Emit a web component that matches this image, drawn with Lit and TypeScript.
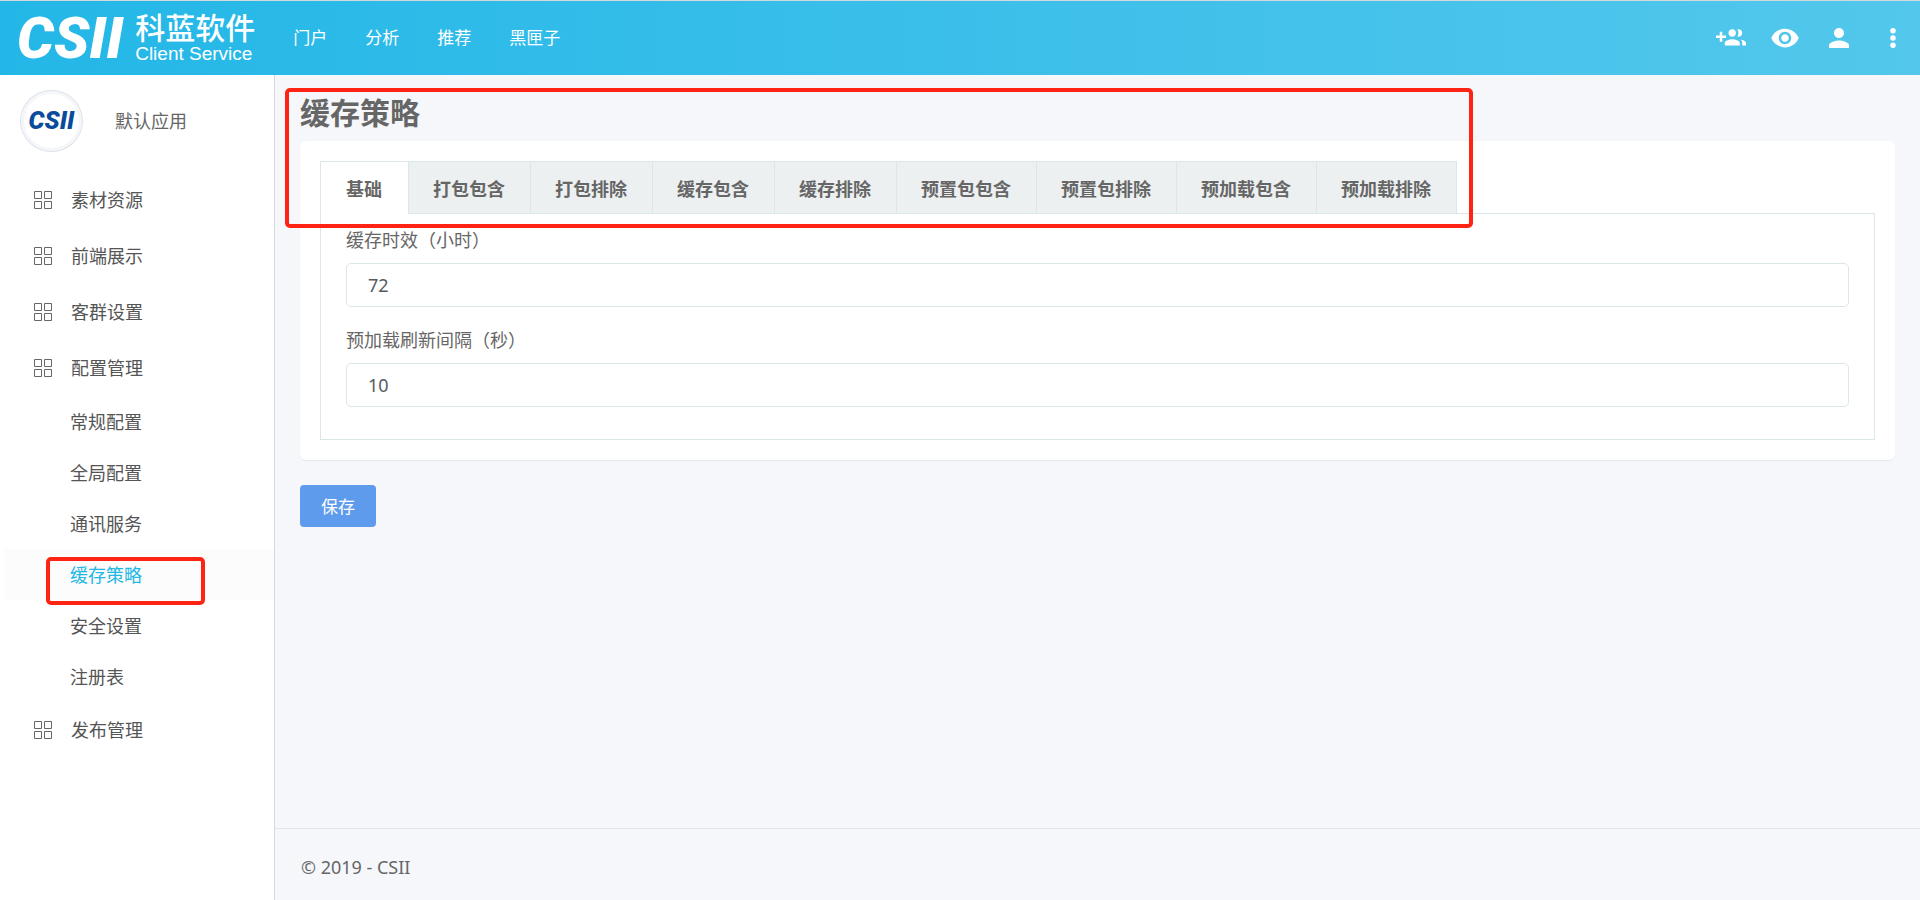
import { LitElement, html, css, svg } from "lit";
import { customElement, state } from "lit/decorators.js";
import { classMap } from "lit/directives/class-map.js";

interface MenuGroup {
  label: string;
  children?: string[];
}

const NAV = ["门户", "分析", "推荐", "黑匣子"];

const MENU: MenuGroup[] = [
  { label: "素材资源" },
  { label: "前端展示" },
  { label: "客群设置" },
  {
    label: "配置管理",
    children: ["常规配置", "全局配置", "通讯服务", "缓存策略", "安全设置", "注册表"],
  },
  { label: "发布管理" },
];

const TABS = [
  "基础",
  "打包包含",
  "打包排除",
  "缓存包含",
  "缓存排除",
  "预置包包含",
  "预置包排除",
  "预加载包含",
  "预加载排除",
];

const ACTIONS = [
  {
    label: "添加用户",
    shape: svg`<path d="M8 10H5V7H3v3H0v2h3v3h2v-3h3v-2zm10 1c1.66 0 2.99-1.34 2.99-3S19.66 5 18 5c-.32 0-.63.05-.91.14.57.81.9 1.79.9 2.86s-.34 2.04-.9 2.86c.28.09.59.14.91.14zm-5 0c1.66 0 2.99-1.34 2.99-3S14.66 5 13 5s-3 1.34-3 3 1.34 3 3 3zm6.62 2.16c.83.73 1.38 1.66 1.38 2.84v2h3v-2c0-1.54-2.37-2.49-4.38-2.84zM13 13c-2 0-6 1-6 3v2h12v-2c0-2-4-3-6-3z"/>`,
  },
  {
    label: "预览",
    shape: svg`<path d="M12 4.5C7 4.5 2.73 7.61 1 12c1.73 4.39 6 7.5 11 7.5s9.27-3.11 11-7.5c-1.73-4.39-6-7.5-11-7.5zM12 17c-2.76 0-5-2.24-5-5s2.24-5 5-5 5 2.24 5 5-2.24 5-5 5zm0-8c-1.66 0-3 1.34-3 3s1.34 3 3 3 3-1.34 3-3-1.34-3-3-3z"/>`,
  },
  {
    label: "账户",
    shape: svg`<path d="M12 12c2.21 0 4-1.79 4-4s-1.79-4-4-4-4 1.79-4 4 1.79 4 4 4zm0 2c-2.67 0-8 1.34-8 4v2h16v-2c0-2.66-5.33-4-8-4z"/>`,
  },
  {
    label: "更多",
    shape: svg`<path d="M12 8.4a2.2 2.2 0 1 0 0-4.4 2.2 2.2 0 0 0 0 4.4zm0 1.4a2.2 2.2 0 1 0 0 4.4 2.2 2.2 0 0 0 0-4.4zm0 5.8a2.2 2.2 0 1 0 0 4.4 2.2 2.2 0 0 0 0-4.4z"/>`,
  },
];

@customElement("app-header")
class AppHeader extends LitElement {
  static styles = css`
    :host {
      display: flex;
      align-items: center;
      box-sizing: border-box;
      height: 75px;
      padding: 0 12px 0 17px;
      border-top: 1px solid #d3d9dc;
      background: linear-gradient(90deg, #23b7e7, #53c7ec);
      color: #fff;
    }
    .brand {
      display: flex;
      align-items: center;
      gap: 12px;
      color: inherit;
      text-decoration: none;
    }
    .mark {
      font: italic 900 58px/60px Roboto, sans-serif;
    }
    .names {
      display: flex;
      flex-direction: column;
      font-family: "Liberation Sans", "Noto Sans CJK SC", sans-serif;
    }
    .cn {
      font-size: 30px;
      line-height: 30px;
      font-weight: 500;
    }
    .en {
      font-size: 19px;
      line-height: 19px;
    }
    .nav {
      display: flex;
      gap: 38px;
      margin-left: 38px;
    }
    .nav a {
      color: inherit;
      font-size: 17px;
      line-height: 24px;
      text-decoration: none;
    }
    .actions {
      display: flex;
      gap: 24px;
      margin-left: auto;
    }
    .actions button {
      padding: 0;
      border: 0;
      background: none;
      color: inherit;
      cursor: pointer;
    }
    .actions svg {
      display: block;
      width: 30px;
      height: 30px;
      fill: currentColor;
    }
  `;

  render() {
    return html`
      <a class="brand" href="#">
        <span class="mark">CSII</span>
        <span class="names">
          <span class="cn">科蓝软件</span>
          <span class="en">Client Service</span>
        </span>
      </a>
      <nav class="nav">${NAV.map((n) => html`<a href="#">${n}</a>`)}</nav>
      <div class="actions">
        ${ACTIONS.map(
          (a) => html`<button type="button" aria-label=${a.label}>
            <svg viewBox="0 0 24 24" aria-hidden="true">${a.shape}</svg>
          </button>`
        )}
      </div>
    `;
  }
}

@customElement("app-sidebar")
class AppSidebar extends LitElement {
  @state() private current = "缓存策略";

  static styles = css`
    :host {
      display: block;
      box-sizing: border-box;
      border-right: 1px solid #d5d7da;
      background: #fff;
      color: #555;
      font-size: 18px;
      line-height: 24px;
    }
    .app {
      display: flex;
      align-items: center;
      gap: 32px;
      padding: 15px 20px 20px;
      color: #666;
    }
    .avatar {
      display: flex;
      align-items: center;
      justify-content: center;
      box-sizing: border-box;
      width: 63px;
      height: 62px;
      border: 1px solid #dde2e8;
      border-radius: 50%;
      box-shadow: inset 0 0 0 3px #f5f6fa;
      color: #0a4c9c;
      font: italic 900 25px/28px Roboto, sans-serif;
    }
    .menu,
    .sub {
      margin: 0;
      padding: 0;
      list-style: none;
    }
    .link {
      display: flex;
      align-items: center;
      gap: 19px;
      height: 56px;
      padding-left: 34px;
      color: inherit;
      text-decoration: none;
    }
    .link svg {
      width: 18px;
      height: 18px;
      fill: none;
      stroke: #666;
    }
    .sub a {
      display: flex;
      align-items: center;
      height: 51px;
      margin-left: 4px;
      padding-left: 66px;
      color: inherit;
      text-decoration: none;
    }
    .sub a.active {
      background: #fcfcfc;
      color: #23b7e5;
    }
    .sub li {
      position: relative;
    }
    .marker {
      position: absolute;
      top: 8px;
      left: 46px;
      right: 69px;
      bottom: -5px;
      border: 4px solid #ff2314;
      border-radius: 5px;
      pointer-events: none;
    }
  `;

  private item(label: string) {
    const active = label === this.current;
    return html`<li>
      <a
        href="#"
        class=${classMap({ active })}
        @click=${(e: Event) => {
          e.preventDefault();
          this.current = label;
        }}
        >${label}</a
      >
      ${active ? html`<span class="marker"></span>` : ""}
    </li>`;
  }

  render() {
    return html`
      <div class="app"><span class="avatar">CSII</span><span>默认应用</span></div>
      <ul class="menu">
        ${MENU.map(
          (g) => html`<li>
            <a class="link" href="#">
              <svg viewBox="0 0 18 18" aria-hidden="true">
                <path d="M.5.5h7v7h-7zM10.5.5h7v7h-7zM.5 10.5h7v7h-7zM10.5 10.5h7v7h-7z" />
              </svg>
              <span>${g.label}</span>
            </a>
            ${g.children
              ? html`<ul class="sub">${g.children.map((c) => this.item(c))}</ul>`
              : ""}
          </li>`
        )}
      </ul>
    `;
  }
}

@customElement("cache-policy")
class CachePolicy extends LitElement {
  @state() private tab = 0;

  static styles = css`
    :host {
      display: block;
      padding: 20px 25px;
      color: #666;
    }
    .region {
      position: relative;
    }
    .marker {
      position: absolute;
      top: -7px;
      left: -15px;
      width: 1180px;
      height: 132px;
      border: 4px solid #ff2314;
      border-radius: 5px;
      pointer-events: none;
    }
    h1 {
      margin: 0 0 10px;
      font-size: 30px;
      line-height: 36px;
      font-weight: 700;
    }
    .card {
      padding: 20px;
      border-radius: 6px;
      background: #fff;
      box-shadow: 0 1px 1px #e6e9ee;
    }
    .tabs {
      position: relative;
      display: flex;
      width: max-content;
      margin-bottom: -1px;
      border: 1px solid #dbe6e8;
      border-bottom: 0;
    }
    .tab {
      height: 52px;
      padding: 0 25px;
      border: 0;
      border-bottom: 1px solid #dbe6e8;
      background: #ecf0f1;
      color: inherit;
      font: inherit;
      font-size: 18px;
      font-weight: 700;
      cursor: pointer;
    }
    .tab + .tab {
      box-shadow: inset 1px 0 #dbe6e8;
    }
    .tab.active {
      padding-right: 26px;
      border-bottom-color: #fff;
      background: #fff;
    }
    .panel {
      padding: 14px 25px 32px;
      border: 1px solid #dbe6e8;
    }
    .field + .field {
      margin-top: 21px;
    }
    label {
      display: block;
      margin-bottom: 10px;
      font-size: 18px;
      line-height: 25px;
    }
    input {
      display: block;
      box-sizing: border-box;
      width: 100%;
      height: 44px;
      padding: 0 21px;
      border: 1px solid #dbe6e8;
      border-radius: 5px;
      background: #fff;
      color: #555b61;
      font: inherit;
      font-size: 18px;
    }
    .save {
      display: block;
      height: 42px;
      margin-top: 25px;
      padding: 0 21px 2px;
      border: 0;
      border-radius: 4px;
      background: #5e9bec;
      color: #fff;
      font: inherit;
      font-size: 17px;
      cursor: pointer;
    }
  `;

  render() {
    return html`
      <div class="region">
        <h1>缓存策略</h1>
        <div class="card">
          <div class="tabs" role="tablist">
            ${TABS.map(
              (t, i) => html`<button
                type="button"
                role="tab"
                aria-selected=${i === this.tab}
                class=${classMap({ tab: true, active: i === this.tab })}
                @click=${() => (this.tab = i)}
              >
                ${t}
              </button>`
            )}
          </div>
          <div class="panel" role="tabpanel">
            <div class="field">
              <label for="ttl">缓存时效（小时）</label>
              <input id="ttl" type="text" value="72" />
            </div>
            <div class="field">
              <label for="interval">预加载刷新间隔（秒）</label>
              <input id="interval" type="text" value="10" />
            </div>
          </div>
        </div>
        <span class="marker"></span>
      </div>
      <button class="save" type="button">保存</button>
    `;
  }
}

@customElement("app-root")
class AppRoot extends LitElement {
  static styles = css`
    :host {
      display: flex;
      flex-direction: column;
      min-height: 100vh;
      background: #f5f7fb;
      font-family: "Noto Sans", "Noto Sans CJK SC", sans-serif;
    }
    .body {
      display: grid;
      grid-template-columns: 275px minmax(0, 1fr);
      flex: 1;
    }
    .main {
      display: flex;
      flex-direction: column;
    }
    .content {
      flex: 1;
    }
    footer {
      padding: 25px 26px 20px;
      border-top: 1px solid #e2e4e8;
      color: #666;
      font-size: 18px;
      line-height: 26px;
    }
  `;

  render() {
    return html`
      <app-header></app-header>
      <div class="body">
        <app-sidebar></app-sidebar>
        <div class="main">
          <cache-policy class="content"></cache-policy>
          <footer>© 2019 - CSII</footer>
        </div>
      </div>
    `;
  }
}
